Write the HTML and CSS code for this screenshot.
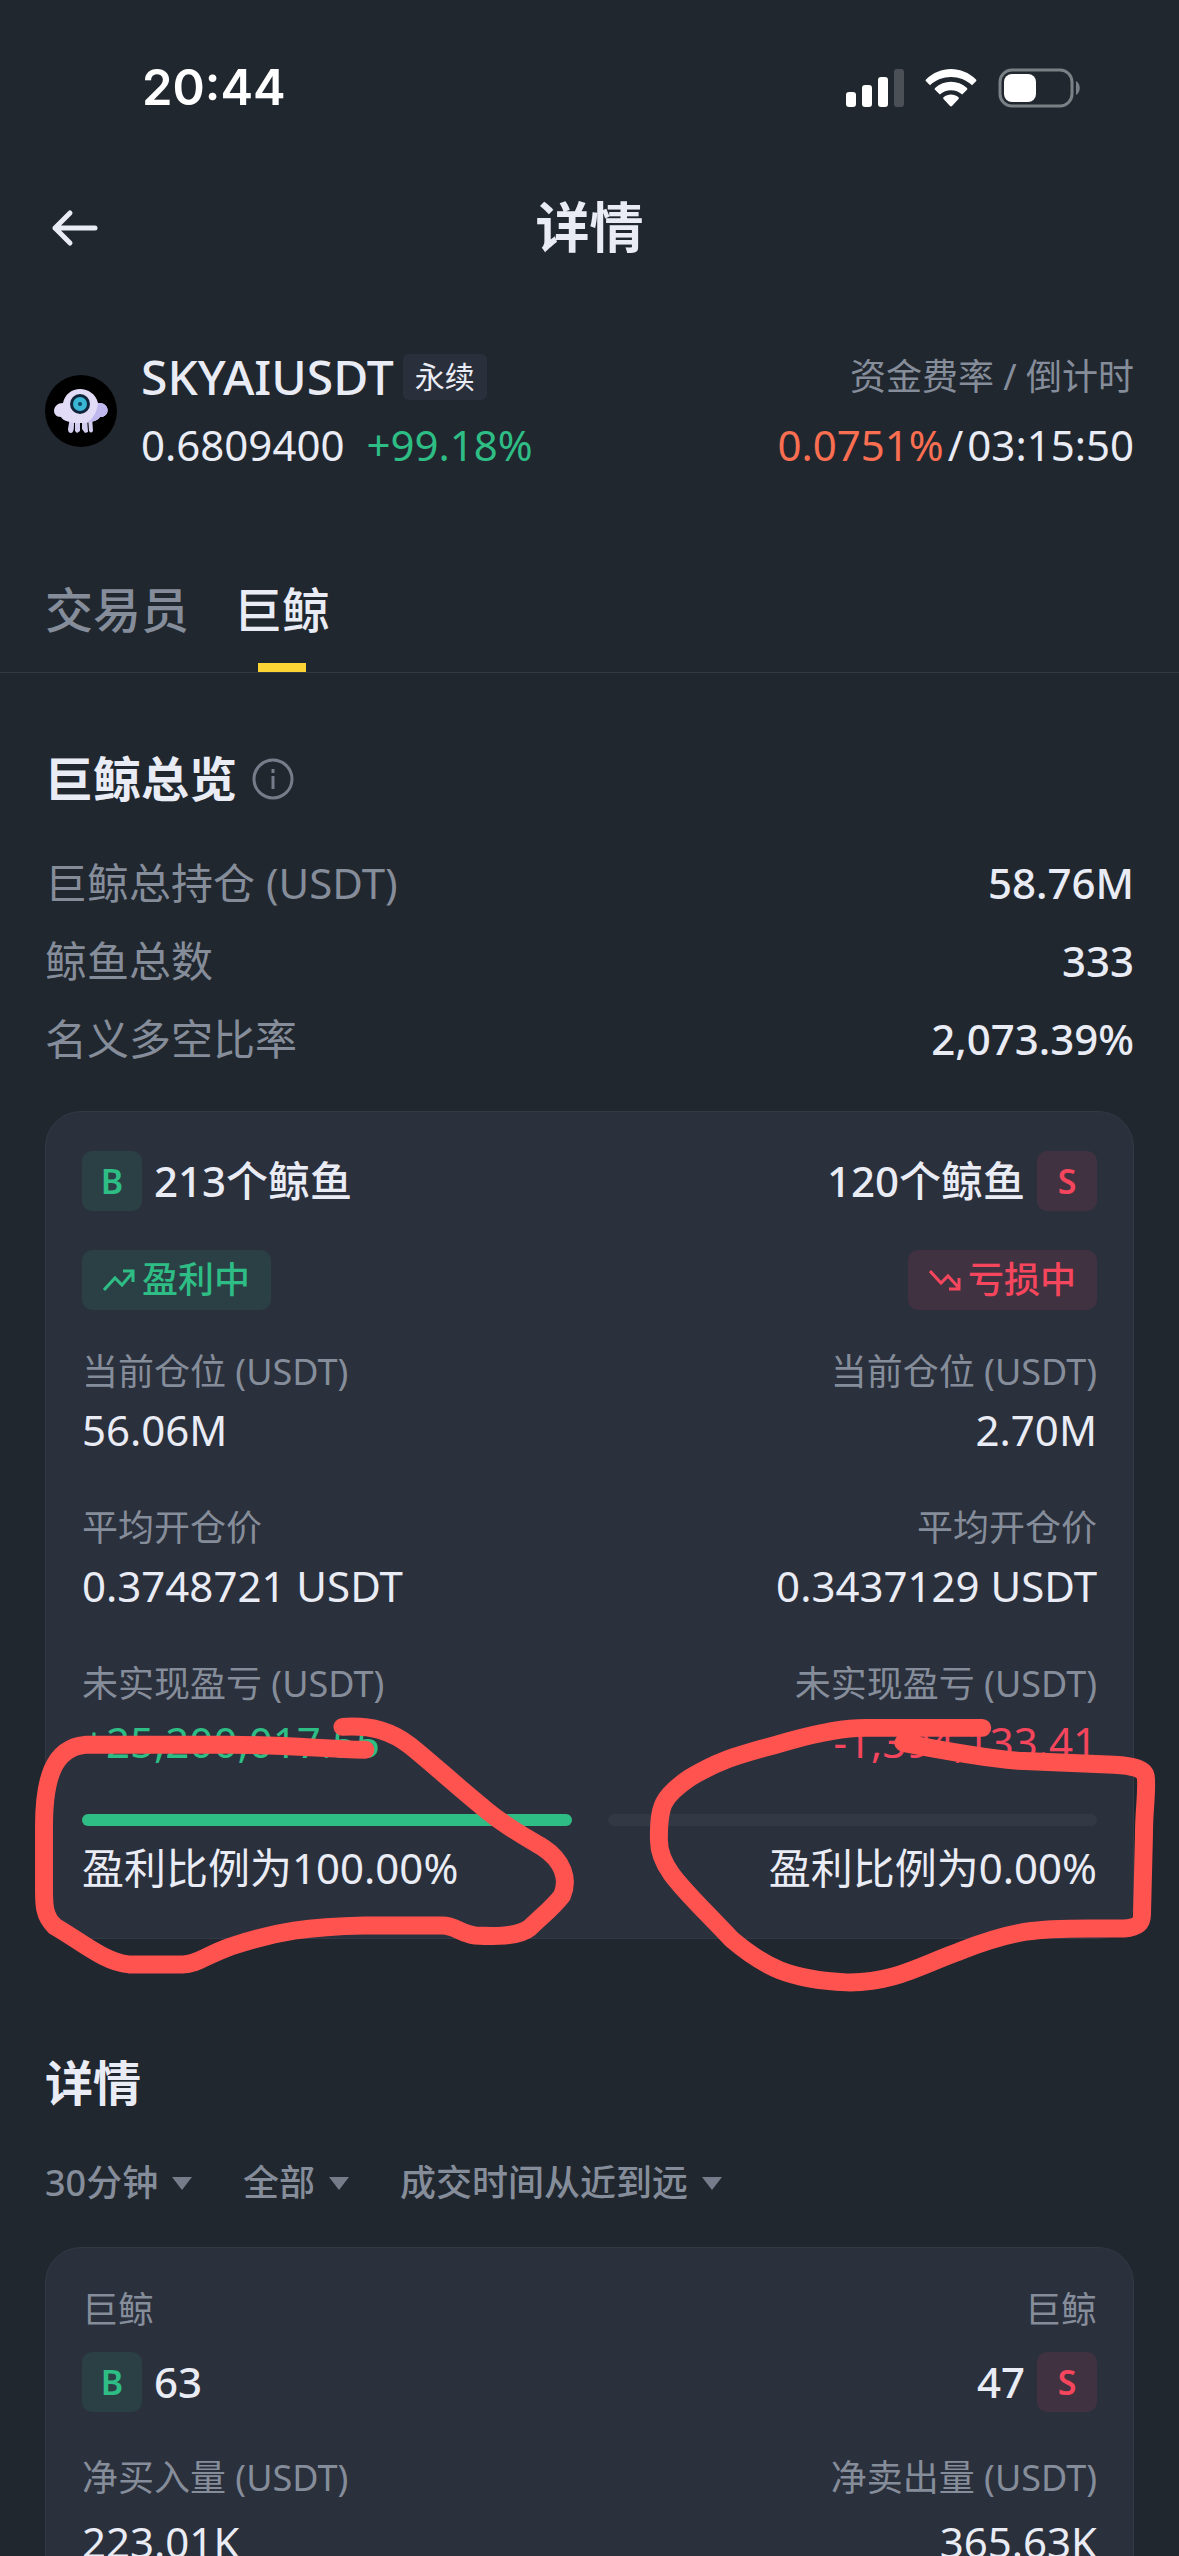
FILE: index.html
```html
<!DOCTYPE html>
<html lang="zh-CN">
<head>
    <meta charset="UTF-8">
    <meta name="viewport" content="width=device-width, initial-scale=1.0">
    <title>详情</title>
    <link rel="stylesheet" href="styles.css">
</head>
<body>

    <div class="status-bar">
        <span class="time">20:44</span>
        <div class="status-icons">
            <svg width="58" height="38" viewBox="0 0 58 38" fill="#fff">
                <rect x="0" y="23" width="10" height="15" rx="3"/>
                <rect x="16" y="16" width="10" height="22" rx="3"/>
                <rect x="32" y="8" width="10" height="30" rx="3"/>
                <rect x="48" y="0" width="10" height="38" rx="3" fill="#4b5057"/>
            </svg>
            <svg width="52" height="38" viewBox="0 0 52 38" fill="#fff">
                <path d="M1 10.500C15-3.500 37-3.500 51 10.500q.8.900 0 1.800L47 16.300C35.500 5.200 16.500 5.200 5 16.300L1 12.300q-.8-.9 0-1.800z"/>
                <path d="M10 19C19 10.500 33 10.500 42 19q.8.900 0 1.800L37.200 25.500C31 19.700 21 19.700 14.800 25.500L10 20.800q-.8-.9 0-1.800z"/>
                <path d="M18.500 28.200c4.500-3.600 10.500-3.600 15 0q.8.800 0 1.700L27 37q-1 .9-2 0l-6.500-7.100q-.8-.9 0-1.700z"/>
            </svg>
            <svg width="84" height="40" viewBox="0 0 84 40">
                <rect x="2" y="2" width="72" height="36" rx="12" fill="none" stroke="#7b8085" stroke-width="3"/>
                <rect x="6" y="6" width="32" height="28" rx="8" fill="#fff"/>
                <path d="M78 13c5 3 5 11 0 14z" fill="#7b8085"/>
            </svg>
        </div>
    </div>

    <header class="header">
        <button class="back" aria-label="返回">
            <svg width="48" height="40" viewBox="0 0 48 40" fill="none" stroke="#eaecf5" stroke-width="5" stroke-linecap="round" stroke-linejoin="round">
                <path d="M45 21H5M20 6L5 21l15 15"/>
            </svg>
        </button>
        <h1>详情</h1>
    </header>

    <section class="symbol">
        <svg class="coin" viewBox="0 0 72 72">
            <circle cx="36" cy="36" r="36" fill="#000"/>
            <path d="M25 42h4v8q0 8-3 8-3 0-3-4zM30 43h5v13l-3 2-2-2zM37 43h5l1 14-3 1-3-4zM43 42h4l1 14q-2 3-4 0z" fill="#d3cdf0"/>
            <path d="M18 28c2-9 9-14 17-14s16 5 18 14c12-1 13 14 2 14-2 4-11 6-20 6s-17-2-19-6c-10 0-9-14 2-14z" fill="#e3dcf7"/>
            <path d="M53 28c12-1 13 14 2 14-2 3-7 5-12 5 6-4 9-11 10-19z" fill="#bfb8ee"/>
            <circle cx="35" cy="29" r="10" fill="#10243a"/>
            <circle cx="35" cy="29" r="7" fill="#38b6d4"/>
            <circle cx="35" cy="29" r="2" fill="#10405a"/>
        </svg>
        <div class="symbol-main">
            <div class="line">
                <span class="name">SKYAIUSDT</span>
                <span class="tag">永续</span>
            </div>
            <div class="line price">
                <span>0.6809400</span>
                <span class="up">+99.18%</span>
            </div>
        </div>
        <div class="funding">
            <div class="line muted">资金费率 / 倒计时</div>
            <div class="line countdown"><span class="rate">0.0751%</span><span>/</span><span>03:15:50</span></div>
        </div>
    </section>

    <nav class="tabs">
        <button class="tab">交易员</button>
        <button class="tab active">巨鲸</button>
    </nav>

    <main>
        <h2 class="title">
            巨鲸总览
            <svg width="42" height="42" viewBox="0 0 42 42" fill="none" stroke="#767d8a" stroke-width="3">
                <circle cx="21" cy="21" r="19"/>
                <path d="M21 18v13M21 11v4"/>
            </svg>
        </h2>

        <dl class="overview">
            <div class="row"><dt>巨鲸总持仓 (USDT)</dt><dd>58.76M</dd></div>
            <div class="row"><dt>鲸鱼总数</dt><dd>333</dd></div>
            <div class="row"><dt>名义多空比率</dt><dd>2,073.39%</dd></div>
        </dl>

        <div class="card">
            <div class="side">
                <div class="count"><span class="badge buy">B</span>213个鲸鱼</div>
                <div class="pill buy">
                    <svg width="32" height="24" viewBox="0 0 32 24" fill="none" stroke="currentColor" stroke-width="3">
                        <path d="M1 22L12 10l7 7L30 4M20 3h10v11"/>
                    </svg>
                    盈利中
                </div>
                <div class="metrics">
                    <div><p class="label">当前仓位 (USDT)</p><p class="value">56.06M</p></div>
                    <div><p class="label">平均开仓价</p><p class="value">0.3748721 USDT</p></div>
                    <div><p class="label">未实现盈亏 (USDT)</p><p class="value up">+25,200,017.55</p></div>
                </div>
                <div class="bar"><div class="fill" style="width: 100%"></div></div>
                <p class="value ratio">盈利比例为100.00%</p>
            </div>
            <div class="side right">
                <div class="count">120个鲸鱼<span class="badge sell">S</span></div>
                <div class="pill sell">
                    <svg width="32" height="24" viewBox="0 0 32 24" fill="none" stroke="currentColor" stroke-width="3">
                        <path d="M1 3l11 12 7-7 11 12M20 21h10V10"/>
                    </svg>
                    亏损中
                </div>
                <div class="metrics">
                    <div><p class="label">当前仓位 (USDT)</p><p class="value">2.70M</p></div>
                    <div><p class="label">平均开仓价</p><p class="value">0.3437129 USDT</p></div>
                    <div><p class="label">未实现盈亏 (USDT)</p><p class="value down">-1,394,133.41</p></div>
                </div>
                <div class="bar"><div class="fill" style="width: 0%"></div></div>
                <p class="value ratio">盈利比例为0.00%</p>
            </div>

            <!-- hand drawn marks -->
            <svg class="marks" viewBox="45 1111 1089 829" fill="none" stroke="#ff5350" stroke-width="18" stroke-linecap="round" stroke-linejoin="round">
                <path d="M342 1727C372 1725 392 1732 410 1746C430 1762 455 1785 482 1807C505 1827 525 1837 543 1848C563 1861 569 1880 562 1896C553 1908 540 1918 530 1928C518 1938 492 1937 475 1936C460 1934 455 1926 442 1926H364C310 1927 275 1932 230 1947C205 1956 196 1965 182 1965H128C104 1963 80 1942 54 1927C43 1917 43 1905 43 1890V1827C43 1780 52 1748 84 1745H230C290 1745 320 1749 365 1750"/>
                <path d="M983 1728H866C840 1728 815 1734 790 1741C745 1754 725 1757 690 1778C662 1797 659 1806 659 1840C659 1870 685 1890 732 1940C765 1968 790 1980 847 1983C895 1984 925 1964 960 1952C1015 1930 1040 1929 1090 1929H1125C1139 1928 1143 1924 1143 1915L1145 1835C1145 1810 1148 1795 1147 1779C1147 1768 1132 1766 1115 1765L1019 1761C985 1758 945 1751 904 1743"/>
            </svg>
        </div>

        <h2 class="title detail-title">详情</h2>

        <div class="filters">
            <label class="filter">
                <select aria-label="周期"><option>30分钟</option></select>
                <svg width="22" height="15" viewBox="0 0 22 15"><path d="M1 1h20L11 14z"/></svg>
            </label>
            <label class="filter">
                <select aria-label="方向"><option>全部</option></select>
                <svg width="22" height="15" viewBox="0 0 22 15"><path d="M1 1h20L11 14z"/></svg>
            </label>
            <label class="filter">
                <select aria-label="排序"><option>成交时间从近到远</option></select>
                <svg width="22" height="15" viewBox="0 0 22 15"><path d="M1 1h20L11 14z"/></svg>
            </label>
        </div>

        <div class="card trades">
            <div class="side">
                <p class="label">巨鲸</p>
                <div class="count"><span class="badge buy">B</span>63</div>
                <div class="metrics">
                    <div><p class="label">净买入量 (USDT)</p><p class="value">223.01K</p></div>
                </div>
            </div>
            <div class="side right">
                <p class="label">巨鲸</p>
                <div class="count">47<span class="badge sell">S</span></div>
                <div class="metrics">
                    <div><p class="label">净卖出量 (USDT)</p><p class="value">365.63K</p></div>
                </div>
            </div>
        </div>
    </main>

</body>
</html>
```
FILE: styles.css
```css
*{
    margin: 0;
    padding: 0;
    box-sizing: border-box;
}

body{
    background: #20272f;
    color: #eaecf5;
    font-family: "Noto Sans", "Noto Sans CJK SC", sans-serif;
    font-size: 42px;
    overflow-x: hidden;
}

button, select{
    background: none;
    border: none;
    color: inherit;
    font: inherit;
}

svg{
    display: block;
    flex: none;
}

/* top of the phone */
.status-bar{
    display: flex;
    justify-content: space-between;
    align-items: center;
    padding: 60px 97px 0 142px;
    line-height: 56px;
}

.time{
    font-family: "Inter", sans-serif;
    font-size: 49px;
    font-weight: 600;
    color: #fff;
}

.status-icons{
    display: flex;
    align-items: center;
    gap: 21px;
}

.header{
    display: grid;
    grid-template-columns: 48px 1fr 48px;
    align-items: center;
    padding: 79px 50px 0;
}

.header h1{
    font-size: 54px;
    font-weight: 700;
    line-height: 64px;
    text-align: center;
}

/* coin row */
.symbol{
    display: flex;
    align-items: center;
    margin-top: 90px;
    padding: 0 45px;
}

.coin{
    width: 72px;
    height: 72px;
    margin-right: 24px;
}

.symbol-main, .funding{
    display: flex;
    flex-direction: column;
    gap: 12px;
}

.funding{
    margin-left: auto;
    align-items: flex-end;
}

.line{
    display: flex;
    align-items: center;
    height: 56px;
    line-height: 56px;
}

.name{
    font-size: 48px;
    font-weight: 500;
}

.tag{
    margin-left: 9px;
    padding: 0 12px;
    font-size: 30px;
    line-height: 46px;
    border-radius: 6px;
    background: #2a303b;
}

.price{
    gap: 22px;
}

.countdown{
    gap: 4px;
}

.muted{
    color: #868d9a;
    font-size: 36px;
}

.up{
    color: #2ebd85;
}

.down{
    color: #f6465d;
}

.rate{
    color: #fa6e51;
}

/* tabs */
.tabs{
    display: flex;
    gap: 45px;
    margin-top: 101px;
    padding: 0 45px;
    border-bottom: 1px solid #333a45;
}

.tab{
    position: relative;
    padding-bottom: 26px;
    font-size: 48px;
    font-weight: 500;
    line-height: 72px;
    color: #868d9a;
}

.tab.active{
    color: #eaecf5;
}

.tab.active::after{
    content: "";
    position: absolute;
    left: 50%;
    bottom: 0;
    width: 48px;
    height: 9px;
    margin-left: -24px;
    background: #fcd535;
}

main{
    padding: 74px 45px 0;
}

.title{
    display: flex;
    align-items: center;
    gap: 15px;
    font-size: 48px;
    font-weight: 700;
    line-height: 64px;
}

.overview{
    margin: 33px 0;
}

.row{
    display: flex;
    justify-content: space-between;
    line-height: 78px;
}

.row dt{
    color: #868d9a;
}

.row dd{
    font-weight: 500;
}

/* cards */
.card{
    position: relative;
    display: grid;
    grid-template-columns: 1fr 1fr;
    gap: 36px;
    padding: 39px 36px 40px;
    border: 1px solid #333a45;
    border-radius: 36px;
    background: #2a303c;
}

.side{
    display: flex;
    flex-direction: column;
    align-items: flex-start;
}

.side.right{
    align-items: flex-end;
    text-align: right;
}

.count{
    display: flex;
    align-items: center;
    gap: 12px;
    font-weight: 500;
    line-height: 56px;
}

.badge{
    width: 60px;
    height: 60px;
    border-radius: 10px;
    font-size: 34px;
    font-weight: 600;
    line-height: 60px;
    text-align: center;
}

.pill{
    display: flex;
    align-items: center;
    gap: 7px;
    margin-top: 39px;
    padding: 0 21px;
    border-radius: 10px;
    font-size: 36px;
    font-weight: 500;
    line-height: 60px;
}

.buy{
    color: #2ebd85;
    background: #2a4045;
}

.sell{
    color: #f6465d;
    background: #403240;
}

.metrics{
    display: grid;
    gap: 40px;
    margin-top: 34px;
}

.label{
    color: #868d9a;
    font-size: 36px;
    line-height: 56px;
}

.value{
    line-height: 60px;
}

.bar{
    width: 100%;
    height: 12px;
    margin: 42px 0 12px;
    border-radius: 6px;
    background: #333944;
}

.fill{
    height: 100%;
    border-radius: 6px;
    background: #2ebd85;
}

.marks{
    position: absolute;
    top: 0;
    left: 0;
    width: 100%;
    overflow: visible;
    pointer-events: none;
}

/* trade list */
.detail-title{
    margin-top: 112px;
}

.filters{
    display: flex;
    gap: 50px;
    margin: 44px 0 40px;
    color: #868d9a;
    font-size: 36px;
    font-weight: 500;
}

.filter{
    display: flex;
    align-items: center;
    gap: 12px;
}

.filter select{
    appearance: none;
    height: 48px;
    line-height: 48px;
}

.filter svg{
    fill: #767d8a;
}

.trades{
    padding-top: 34px;
}

.trades .count{
    margin-top: 14px;
}

.trades .metrics{
    margin-top: 38px;
}

.trades .value{
    margin-top: 6px;
}
```
